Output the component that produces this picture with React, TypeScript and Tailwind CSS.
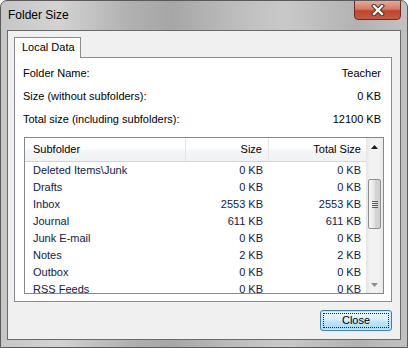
import React from 'react'

const ROWS: [string, string, string][] = [
  ['Deleted Items\\Junk', '0 KB', '0 KB'],
  ['Drafts', '0 KB', '0 KB'],
  ['Inbox', '2553 KB', '2553 KB'],
  ['Journal', '611 KB', '611 KB'],
  ['Junk E-mail', '0 KB', '0 KB'],
  ['Notes', '2 KB', '2 KB'],
  ['Outbox', '0 KB', '0 KB'],
  ['RSS Feeds', '0 KB', '0 KB'],
]

const INFO: [string, string][] = [
  ['Folder Name:', 'Teacher'],
  ['Size (without subfolders):', '0 KB'],
  ['Total size (including subfolders):', '12100 KB'],
]

function CloseGlyph() {
  return (
    <svg width="14" height="12" viewBox="0 0 14 12">
      <path d="M3 2 L11 10 M11 2 L3 10" stroke="#3a3a3a" strokeWidth="4.2" strokeLinecap="square" />
      <path d="M3 2 L11 10 M11 2 L3 10" stroke="#fff" strokeWidth="2.2" strokeLinecap="square" />
    </svg>
  )
}

function ScrollBar() {
  return (
    <div className="w-[17px] h-full flex flex-col bg-[linear-gradient(to_right,#e6e6e6,#f2f2f2_30%,#f2f2f2_70%,#e9e9e9)]">
      <div className="h-[17px] flex items-center justify-center">
        <svg width="7" height="4" viewBox="0 0 7 4"><path d="M0 4 L3.5 0 L7 4 Z" fill="#1a1a1a" /></svg>
      </div>
      <div className="flex-1 px-[2px] pt-[24px]">
        <div className="h-[50px] rounded-[2px] border border-[#8e8f8f] bg-[linear-gradient(to_right,#f4f4f4,#e8e8e8_45%,#d5d5d5_55%,#cfcfcf)] flex flex-col items-center justify-center gap-[1px]">
          <div className="w-[6px] h-px bg-[#5f5f5f]" />
          <div className="w-[6px] h-px bg-[#5f5f5f]" />
          <div className="w-[6px] h-px bg-[#5f5f5f]" />
          <div className="w-[6px] h-px bg-[#5f5f5f]" />
        </div>
      </div>
      <div className="h-[17px] flex items-center justify-center">
        <svg width="7" height="4" viewBox="0 0 7 4"><path d="M0 0 L7 0 L3.5 4 Z" fill="#8c8c8c" /></svg>
      </div>
    </div>
  )
}

export default function App() {
  return (
    <div
      className="w-[408px] h-[348px] flex flex-col rounded-t-[7px] border border-[#5a5a5a] bg-[linear-gradient(to_right,#c6c6c6,#d3d3d3_14%,#b0b0b0_32%,#a6a6a6_42%,#bdbdbd_58%,#c9c9c9_70%,#b2b2b2_88%,#c2c2c2)] text-black overflow-hidden"
      style={{ fontFamily: '"Liberation Sans", Arial, sans-serif' }}
    >
      <div className="h-[29px] flex items-start">
        <div className="flex-1 pl-[7px] pt-[7px] text-[12px] leading-[15px]">Folder Size</div>
        <div className="w-[47px] h-[20px] mr-[6px] -mt-px rounded-b-[4px] border border-[#6b2a22] bg-[linear-gradient(to_bottom,#e9a998,#d47a66_45%,#c0442e_55%,#c75a40)] flex items-center justify-center">
          <CloseGlyph />
        </div>
      </div>

      <div className="h-[310px] mx-[6px] border border-[#6a6a6a] bg-[#f0f0f0] flex flex-col">
        <div className="pl-[6px] pt-[6px] pr-[8px]">
          <div className="relative z-10 -mb-px w-[67px] h-[21px] border border-b-0 border-[#898c95] bg-white pl-[7px] pt-[3px] text-[11px] leading-[13px]">
            Local Data
          </div>
          <div className="h-[245px] border border-[#898c95] bg-white flex flex-col">
            <div className="pt-[7px] pl-[8px] pr-[10px] flex flex-col gap-[7px] text-[11px]">
              {INFO.map(([k, v]) => (
                <div key={k} className="h-[16px] flex items-center justify-between">
                  <span>{k}</span>
                  <span>{v}</span>
                </div>
              ))}
            </div>
            <div className="ml-[9px] mt-[10px] w-[360px] h-[157px] border border-[#828790] bg-white flex text-[11px] overflow-hidden">
              <div className="flex-1 flex flex-col overflow-hidden">
                <div className="h-[24px] shrink-0 flex border-b border-[#d5d5d5] bg-[linear-gradient(to_bottom,#ffffff,#ffffff_45%,#f4f5f7_55%,#f1f2f4)]">
                  <div className="w-[161px] pl-[8px] flex items-center border-r border-[#e3e4e6]">Subfolder</div>
                  <div className="w-[83px] pr-[6px] flex items-center justify-end border-r border-[#e3e4e6]">Size</div>
                  <div className="flex-1 pr-[5px] flex items-center justify-end">Total Size</div>
                </div>
                {ROWS.map(([n, s, t]) => (
                  <div key={n} className="h-[17px] shrink-0 flex items-center text-[#10204a]">
                    <div className="w-[161px] pl-[8px]">{n}</div>
                    <div className="w-[83px] pr-[6px] text-right">{s}</div>
                    <div className="flex-1 pr-[5px] text-right">{t}</div>
                  </div>
                ))}
              </div>
              <ScrollBar />
            </div>
          </div>
          <div className="flex justify-end pt-[8px]">
            <div className="w-[72px] h-[21px] rounded-[3px] border border-[#3c7fb1] bg-[linear-gradient(to_bottom,#eaf6fd,#d9f0fc_45%,#bee6fd_55%,#a7d9f5)] shadow-[inset_0_0_0_1px_#c6e8fb] p-[2px]">
              <div className="h-full border border-dotted border-[#222] flex items-center justify-center text-[11px]">
                Close
              </div>
            </div>
          </div>
        </div>
      </div>
    </div>
  )
}
